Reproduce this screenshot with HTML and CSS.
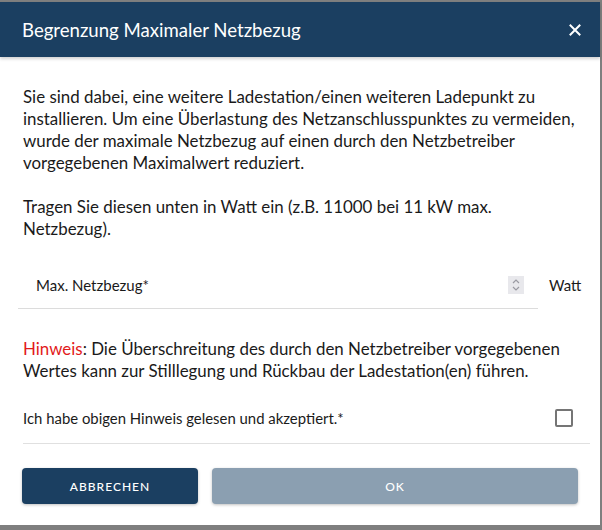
FILE: index.html
```html
<!DOCTYPE html>
<html lang="de">
<head>
<meta charset="utf-8">
<link rel="stylesheet" href="styles.css">
</head>
<body>
<div class="dialog">
  <div class="header">
    <div class="title">Begrenzung Maximaler Netzbezug</div>
    <div class="close">
      <svg width="12" height="12" viewBox="0 0 12 12"><path d="M1.5 1.5 L10.5 10.5 M10.5 1.5 L1.5 10.5" stroke="#fff" stroke-width="2" stroke-linecap="square"/></svg>
    </div>
  </div>
  <div class="content">
    <p class="text">Sie sind dabei, eine weitere Ladestation/einen weiteren Ladepunkt zu installieren. Um eine Überlastung des Netzanschlusspunktes zu vermeiden, wurde der maximale Netzbezug auf einen durch den Netzbetreiber vorgegebenen Maximalwert reduziert.</p>
    <p class="text narrow">Tragen Sie diesen unten in Watt ein (z.B. 11000 bei 11 kW max. Netzbezug).</p>
    <div class="field-row">
      <div class="field">
        <span class="placeholder">Max. Netzbezug*</span>
        <span class="spinner">
          <svg width="16" height="18" viewBox="0 0 16 18"><path d="M5 7 L8 4 L11 7 M5 11 L8 14 L11 11" stroke="#9a9aa2" stroke-width="1.2" fill="none"/></svg>
        </span>
      </div>
      <span class="unit">Watt</span>
    </div>
    <p class="text hint"><span class="red">Hinweis</span>: Die Überschreitung des durch den Netzbetreiber vorgegebenen Wertes kann zur Stilllegung und Rückbau der Ladestation(en) führen.</p>
    <div class="check-row">
      <span class="check-label">Ich habe obigen Hinweis gelesen und akzeptiert.*</span>
      <span class="checkbox"></span>
    </div>
    <div class="actions">
      <button class="btn cancel">ABBRECHEN</button>
      <button class="btn ok">OK</button>
    </div>
  </div>
</div>
</body>
</html>
```

FILE: styles.css
```css
html, body {
  margin: 0;
  padding: 0;
}
body {
  background: #7f7f7f;
  width: 602px;
  height: 530px;
  overflow: hidden;
  font-family: "Lato", "Open Sans", sans-serif;
  color: #1a1a1a;
}
.dialog {
  margin-top: 2px;
  width: 600px;
  height: 523px;
  background: #fff;
  display: flex;
  flex-direction: column;
}
.header {
  height: 55px;
  background: #1b3f61;
  display: flex;
  align-items: center;
  justify-content: space-between;
  padding: 0 19px 0 22px;
  box-shadow: 0 2px 3px rgba(0,0,0,0.18);
  position: relative;
  z-index: 1;
}
.title {
  color: #fff;
  font-size: 18.6px;
}
.close {
  display: flex;
  align-items: center;
}
.content {
  padding: 29px 10px 0 23px;
}
.text {
  margin: 0 0 22px 0;
  font-size: 16.9px;
  line-height: 22px;
  padding-right: 4px;
}
.narrow {
  max-width: 500px;
}
.field-row {
  display: flex;
  align-items: flex-start;
  margin-left: -5px;
  margin-top: 6px;
}
.field {
  width: 520px;
  height: 47px;
  border-bottom: 1px solid #dcdcdc;
  display: flex;
  align-items: center;
  justify-content: space-between;
  padding: 0 14px 0 18px;
  box-sizing: border-box;
}
.placeholder {
  font-size: 15px;
}
.spinner {
  display: flex;
  width: 16px;
  height: 18px;
  background: #e8e8ec;
}
.unit {
  margin-left: 11px;
  font-size: 15px;
  line-height: 47px;
}
.hint {
  margin-top: 29px;
  margin-bottom: 24px;
}
.red {
  color: #e21a1a;
}
.check-row {
  display: flex;
  justify-content: space-between;
  align-items: center;
  height: 23px;
  padding-right: 17px;
  padding-bottom: 14px;
  border-bottom: 1px solid #e0e0e0;
}
.check-label {
  font-size: 14.9px;
}
.checkbox {
  width: 14px;
  height: 14px;
  border: 2px solid #757575;
  border-radius: 2px;
}
.actions {
  display: flex;
  gap: 14px;
  margin-top: 24px;
  margin-left: -1px;
  padding-right: 12px;
}
.btn {
  height: 36px;
  border: none;
  border-radius: 4px;
  color: #fff;
  font-family: "Lato", "Open Sans", sans-serif;
  font-size: 12px;
  letter-spacing: 1px;
  font-weight: 500;
  box-shadow: 0 1px 3px rgba(0,0,0,0.25);
}
.cancel {
  width: 176px;
  background: #1b3f61;
}
.ok {
  flex: 1;
  background: #8b9fb1;
}
```
